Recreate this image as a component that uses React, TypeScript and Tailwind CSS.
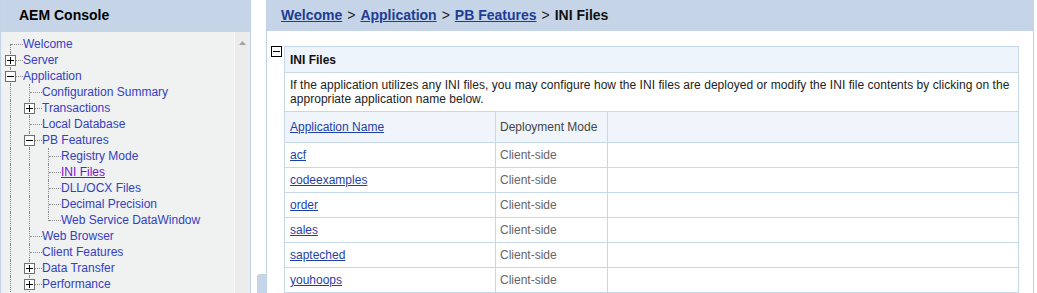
import * as React from "react";

type Row = {
  label: string;
  depth: number;
  toggle?: "+" | "-";
  anc: boolean[];
  first?: boolean;
  last?: boolean;
  active?: boolean;
};

const rows: Row[] = [
  { label: "Welcome", depth: 0, anc: [], first: true },
  { label: "Server", depth: 0, anc: [], toggle: "+" },
  { label: "Application", depth: 0, anc: [], toggle: "-" },
  { label: "Configuration Summary", depth: 1, anc: [true] },
  { label: "Transactions", depth: 1, anc: [true], toggle: "+" },
  { label: "Local Database", depth: 1, anc: [true] },
  { label: "PB Features", depth: 1, anc: [true], toggle: "-" },
  { label: "Registry Mode", depth: 2, anc: [true, true] },
  { label: "INI Files", depth: 2, anc: [true, true], active: true },
  { label: "DLL/OCX Files", depth: 2, anc: [true, true] },
  { label: "Decimal Precision", depth: 2, anc: [true, true] },
  { label: "Web Service DataWindow", depth: 2, anc: [true, true], last: true },
  { label: "Web Browser", depth: 1, anc: [true] },
  { label: "Client Features", depth: 1, anc: [true] },
  { label: "Data Transfer", depth: 1, anc: [true], toggle: "+" },
  { label: "Performance", depth: 1, anc: [true], toggle: "+" },
];

const apps = ["acf", "codeexamples", "order", "sales", "sapteched", "youhoops"];

function ToggleBox({ sign, dark }: { sign: "+" | "-"; dark?: boolean }) {
  return (
    <span
      className={
        "relative block h-[11px] w-[11px] border bg-white " +
        (dark ? "border-black" : "border-[#707070]")
      }
    >
      <span className="absolute left-[1px] top-[4px] h-px w-[7px] bg-black" />
      {sign === "+" && (
        <span className="absolute left-[4px] top-[1px] h-[7px] w-px bg-black" />
      )}
    </span>
  );
}

function TreeRow({ row }: { row: Row }) {
  return (
    <div className="flex h-4 items-center">
      {row.anc.map((on, i) => (
        <span key={i} className="relative h-4 w-[19px] shrink-0">
          {on && (
            <span className="absolute left-[6px] top-0 h-4 border-l border-dotted border-[#8a8a8a]" />
          )}
        </span>
      ))}
      <span className="relative h-4 w-[19px] shrink-0">
        <span
          className={
            "absolute left-[6px] border-l border-dotted border-[#8a8a8a] " +
            (row.first ? "top-[8px] h-[8px]" : row.last ? "top-0 h-[9px]" : "top-0 h-4")
          }
        />
        <span className="absolute left-[7px] top-[8px] w-[12px] border-t border-dotted border-[#8a8a8a]" />
        {row.toggle && (
          <span className="absolute left-[1px] top-[3px]">
            <ToggleBox sign={row.toggle} />
          </span>
        )}
      </span>
      <span
        className={
          "whitespace-nowrap " +
          (row.active ? "text-[#7a12cc] underline" : "text-[#3440c2]")
        }
      >
        {row.label}
      </span>
    </div>
  );
}

export default function App() {
  return (
    <div
      className="flex h-[293px] w-[1037px] overflow-hidden bg-white text-[12px] leading-4"
      style={{ fontFamily: '"Liberation Sans", Arial, sans-serif' }}
    >
      {/* left navigation */}
      <div className="flex w-[251px] shrink-0 flex-col border-r border-l border-[#c3d3e6]">
        <div className="flex h-[32px] shrink-0 items-center bg-[#c5d5e7] pl-[18px] pb-[3px] text-[14px] font-bold text-black">
          AEM Console
        </div>
        <div className="flex min-h-0 flex-1 bg-[#f0f1f1]">
          <div className="min-w-0 flex-1 overflow-hidden pt-[4px] pl-[3px]">
            {rows.map((r) => (
              <TreeRow key={r.label} row={r} />
            ))}
          </div>
          <div className="flex w-[16px] shrink-0 justify-center border-l border-[#f8f8f8] bg-[#ececec] pt-[9px]">
            <svg width="7" height="4" viewBox="0 0 7 4">
              <path d="M0 4 L3.5 0 L7 4 Z" fill="#a3a3a3" />
            </svg>
          </div>
        </div>
      </div>

      {/* splitter gutter */}
      <div className="flex w-[15px] shrink-0 flex-col justify-end items-end">
        <div className="h-[19px] w-[9px] rounded-tl-[3px] bg-[#c5d5e9]" />
      </div>

      {/* content panel */}
      <div className="flex w-[768px] shrink-0 flex-col border-x border-[#c3d3e6]">
        <div className="flex h-[31px] shrink-0 items-center bg-[#c5d5e7] pl-[14px] pb-[2px] text-[14px] font-bold text-[#111]">
          <a className="text-[#1e3c94] underline">Welcome</a>
          <span className="px-[5px] font-normal text-[#222]">&gt;</span>
          <a className="text-[#1e3c94] underline">Application</a>
          <span className="px-[5px] font-normal text-[#222]">&gt;</span>
          <a className="text-[#1e3c94] underline">PB Features</a>
          <span className="px-[5px] font-normal text-[#222]">&gt;</span>
          <span>INI Files</span>
        </div>
        <div className="flex items-start pt-[15px] pl-[4px]">
          <ToggleBox sign="-" dark />
          <div className="ml-[2px] w-[735px] border border-[#c6d7ea]">
            <div className="flex h-[26px] items-center border-b border-[#c6d7ea] bg-[#eef4fc] pl-[5px] font-bold text-[#111]">
              INI Files
            </div>
            <p className="px-[5px] py-[5px] leading-[14px] text-[#222] tracking-[0.04px]">
              If the application utilizes any INI files, you may configure how the INI files are
              deployed or modify the INI file contents by clicking on the appropriate application
              name below.
            </p>
            <div className="grid grid-cols-[211px_112px_1fr] border-t border-[#c6d7ea]">
              <div className="flex h-[31px] items-center border-r border-b border-[#c6d7ea] bg-[#f0f5fc] pl-[5px]">
                <a className="text-[#1f3fa8] underline">Application Name</a>
              </div>
              <div className="flex h-[31px] items-center border-r border-b border-[#c6d7ea] bg-[#f0f5fc] pl-[4px] text-[#444]">
                Deployment Mode
              </div>
              <div className="h-[31px] border-b border-[#c6d7ea] bg-[#f0f5fc]" />
              {apps.map((a) => (
                <React.Fragment key={a}>
                  <div className="flex h-[25px] items-center border-r border-b border-[#c6d7ea] pl-[5px]">
                    <a className="text-[#1f3fa8] underline">{a}</a>
                  </div>
                  <div className="flex h-[25px] items-center border-r border-b border-[#c6d7ea] pl-[4px] text-[#666]">
                    Client-side
                  </div>
                  <div className="h-[25px] border-b border-[#c6d7ea]" />
                </React.Fragment>
              ))}
            </div>
          </div>
        </div>
      </div>
    </div>
  );
}
